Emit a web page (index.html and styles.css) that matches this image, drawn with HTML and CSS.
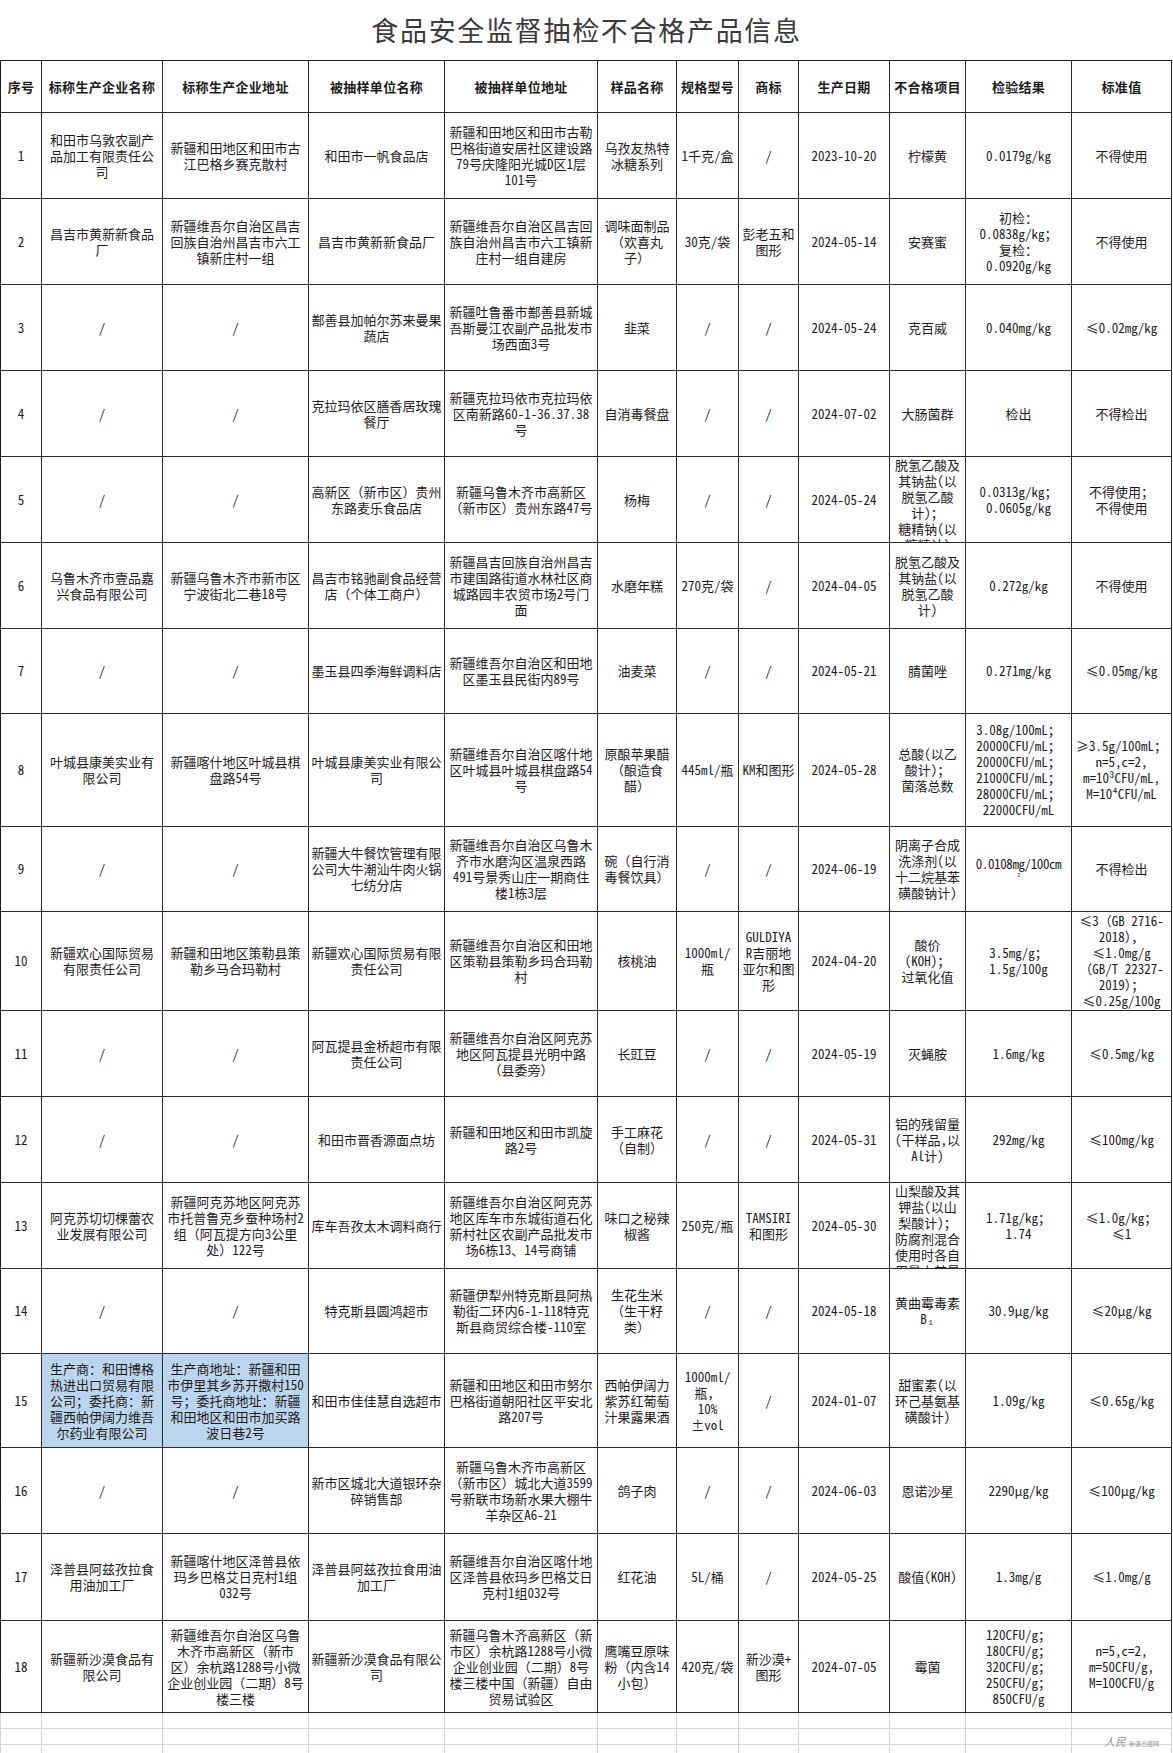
FILE: index.html
```html
<!DOCTYPE html>
<html lang="zh-CN">
<head>
<meta charset="utf-8">
<title>食品安全监督抽检不合格产品信息</title>
<link rel="stylesheet" href="styles.css">
</head>
<body>
<div class="page">
  <h1 class="title">食品安全监督抽检不合格产品信息</h1>
  <div class="sheet">
    <div class="row head">
      <div class="c">序号</div><div class="c">标称生产企业名称</div><div class="c">标称生产企业地址</div><div class="c">被抽样单位名称</div><div class="c">被抽样单位地址</div><div class="c">样品名称</div><div class="c">规格型号</div><div class="c">商标</div><div class="c">生产日期</div><div class="c">不合格项目</div><div class="c">检验结果</div><div class="c">标准值</div>
    </div>
    <div class="row">
      <div class="c">1</div><div class="c">和田市乌敦农副产<br>品加工有限责任公<br>司</div><div class="c">新疆和田地区和田市古<br>江巴格乡赛克散村</div><div class="c">和田市一帆食品店</div><div class="c">新疆和田地区和田市古勒<br>巴格街道安居社区建设路<br>79号庆隆阳光城D区1层<br>101号</div><div class="c">乌孜友热特<br>冰糖系列</div><div class="c">1千克/盒</div><div class="c">/</div><div class="c">2023-10-20</div><div class="c">柠檬黄</div><div class="c">0.0179g/kg</div><div class="c">不得使用</div>
    </div>
    <div class="row">
      <div class="c">2</div><div class="c">昌吉市黄新新食品<br>厂</div><div class="c">新疆维吾尔自治区昌吉<br>回族自治州昌吉市六工<br>镇新庄村一组</div><div class="c">昌吉市黄新新食品厂</div><div class="c">新疆维吾尔自治区昌吉回<br>族自治州昌吉市六工镇新<br>庄村一组自建房</div><div class="c">调味面制品<br>（欢喜丸<br>子）</div><div class="c">30克/袋</div><div class="c">彭老五和<br>图形</div><div class="c">2024-05-14</div><div class="c">安赛蜜</div><div class="c">初检：<br>0.0838g/kg；<br>复检：<br>0.0920g/kg</div><div class="c">不得使用</div>
    </div>
    <div class="row">
      <div class="c">3</div><div class="c">/</div><div class="c">/</div><div class="c">鄯善县加帕尔苏来曼果<br>蔬店</div><div class="c">新疆吐鲁番市鄯善县新城<br>吾斯曼江农副产品批发市<br>场西面3号</div><div class="c">韭菜</div><div class="c">/</div><div class="c">/</div><div class="c">2024-05-24</div><div class="c">克百威</div><div class="c">0.040mg/kg</div><div class="c">≤0.02mg/kg</div>
    </div>
    <div class="row">
      <div class="c">4</div><div class="c">/</div><div class="c">/</div><div class="c">克拉玛依区膳香居玫瑰<br>餐厅</div><div class="c">新疆克拉玛依市克拉玛依<br>区南新路60-1-36.37.38<br>号</div><div class="c">自消毒餐盘</div><div class="c">/</div><div class="c">/</div><div class="c">2024-07-02</div><div class="c">大肠菌群</div><div class="c">检出</div><div class="c">不得检出</div>
    </div>
    <div class="row">
      <div class="c">5</div><div class="c">/</div><div class="c">/</div><div class="c">高新区（新市区）贵州<br>东路麦乐食品店</div><div class="c">新疆乌鲁木齐市高新区<br>（新市区）贵州东路47号</div><div class="c">杨梅</div><div class="c">/</div><div class="c">/</div><div class="c">2024-05-24</div><div class="c">脱氢乙酸及<br>其钠盐(以<br>脱氢乙酸<br>计)；<br>糖精钠(以<br>糖精计)</div><div class="c">0.0313g/kg；<br>0.0605g/kg</div><div class="c">不得使用；<br>不得使用</div>
    </div>
    <div class="row">
      <div class="c">6</div><div class="c">乌鲁木齐市壹品嘉<br>兴食品有限公司</div><div class="c">新疆乌鲁木齐市新市区<br>宁波街北二巷18号</div><div class="c">昌吉市铭驰副食品经营<br>店（个体工商户）</div><div class="c">新疆昌吉回族自治州昌吉<br>市建国路街道水林社区商<br>城路园丰农贸市场2号门<br>面</div><div class="c">水磨年糕</div><div class="c">270克/袋</div><div class="c">/</div><div class="c">2024-04-05</div><div class="c">脱氢乙酸及<br>其钠盐(以<br>脱氢乙酸<br>计)</div><div class="c">0.272g/kg</div><div class="c">不得使用</div>
    </div>
    <div class="row">
      <div class="c">7</div><div class="c">/</div><div class="c">/</div><div class="c">墨玉县四季海鲜调料店</div><div class="c">新疆维吾尔自治区和田地<br>区墨玉县民街内89号</div><div class="c">油麦菜</div><div class="c">/</div><div class="c">/</div><div class="c">2024-05-21</div><div class="c">腈菌唑</div><div class="c">0.271mg/kg</div><div class="c">≤0.05mg/kg</div>
    </div>
    <div class="row">
      <div class="c">8</div><div class="c">叶城县康美实业有<br>限公司</div><div class="c">新疆喀什地区叶城县棋<br>盘路54号</div><div class="c">叶城县康美实业有限公<br>司</div><div class="c">新疆维吾尔自治区喀什地<br>区叶城县叶城县棋盘路54<br>号</div><div class="c">原酿苹果醋<br>（酿造食<br>醋）</div><div class="c">445ml/瓶</div><div class="c">KM和图形</div><div class="c">2024-05-28</div><div class="c">总酸(以乙<br>酸计)；<br>菌落总数</div><div class="c">3.08g/100mL；<br>20000CFU/mL；<br>20000CFU/mL；<br>21000CFU/mL；<br>28000CFU/mL；<br>22000CFU/mL</div><div class="c">≥3.5g/100mL；<br>n=5,c=2,<br>m=10³CFU/mL,<br>M=10⁴CFU/mL</div>
    </div>
    <div class="row">
      <div class="c">9</div><div class="c">/</div><div class="c">/</div><div class="c">新疆大牛餐饮管理有限<br>公司大牛潮汕牛肉火锅<br>七纺分店</div><div class="c">新疆维吾尔自治区乌鲁木<br>齐市水磨沟区温泉西路<br>491号景秀山庄一期商住<br>楼1栋3层</div><div class="c">碗（自行消<br>毒餐饮具）</div><div class="c">/</div><div class="c">/</div><div class="c">2024-06-19</div><div class="c">阴离子合成<br>洗涤剂(以<br>十二烷基苯<br>磺酸钠计)</div><div class="c tight">0.0108mg/100cm<br><span class="sup">²</span></div><div class="c">不得检出</div>
    </div>
    <div class="row">
      <div class="c">10</div><div class="c">新疆欢心国际贸易<br>有限责任公司</div><div class="c">新疆和田地区策勒县策<br>勒乡马合玛勒村</div><div class="c">新疆欢心国际贸易有限<br>责任公司</div><div class="c">新疆维吾尔自治区和田地<br>区策勒县策勒乡玛合玛勒<br>村</div><div class="c">核桃油</div><div class="c">1000ml/<br>瓶</div><div class="c">GULDIYA<br>R吉丽地<br>亚尔和图<br>形</div><div class="c">2024-04-20</div><div class="c">酸价<br>(KOH)；<br>过氧化值</div><div class="c">3.5mg/g；<br>1.5g/100g</div><div class="c">≤3（GB 2716-<br>2018），<br>≤1.0mg/g<br>（GB/T 22327-<br>2019）；<br>≤0.25g/100g</div>
    </div>
    <div class="row">
      <div class="c">11</div><div class="c">/</div><div class="c">/</div><div class="c">阿瓦提县金桥超市有限<br>责任公司</div><div class="c">新疆维吾尔自治区阿克苏<br>地区阿瓦提县光明中路<br>（县委旁）</div><div class="c">长豇豆</div><div class="c">/</div><div class="c">/</div><div class="c">2024-05-19</div><div class="c">灭蝇胺</div><div class="c">1.6mg/kg</div><div class="c">≤0.5mg/kg</div>
    </div>
    <div class="row">
      <div class="c">12</div><div class="c">/</div><div class="c">/</div><div class="c">和田市晋香源面点坊</div><div class="c">新疆和田地区和田市凯旋<br>路2号</div><div class="c">手工麻花<br>（自制）</div><div class="c">/</div><div class="c">/</div><div class="c">2024-05-31</div><div class="c">铝的残留量<br>(干样品,以<br>Al计)</div><div class="c">292mg/kg</div><div class="c">≤100mg/kg</div>
    </div>
    <div class="row">
      <div class="c">13</div><div class="c">阿克苏切切棵蕾农<br>业发展有限公司</div><div class="c">新疆阿克苏地区阿克苏<br>市托普鲁克乡蚕种场村2<br>组（阿瓦提方向3公里<br>处）122号</div><div class="c">库车吾孜太木调料商行</div><div class="c">新疆维吾尔自治区阿克苏<br>地区库车市东城街道石化<br>新村社区农副产品批发市<br>场6栋13、14号商铺</div><div class="c">味口之秘辣<br>椒酱</div><div class="c">250克/瓶</div><div class="c">TAMSIRI<br>和图形</div><div class="c">2024-05-30</div><div class="c">山梨酸及其<br>钾盐(以山<br>梨酸计)；<br>防腐剂混合<br>使用时各自<br>用量占其最<br>大使用量</div><div class="c">1.71g/kg；<br>1.74</div><div class="c">≤1.0g/kg；<br>≤1</div>
    </div>
    <div class="row">
      <div class="c">14</div><div class="c">/</div><div class="c">/</div><div class="c">特克斯县圆鸿超市</div><div class="c">新疆伊犁州特克斯县阿热<br>勒街二环内6-1-118特克<br>斯县商贸综合楼-110室</div><div class="c">生花生米<br>（生干籽<br>类）</div><div class="c">/</div><div class="c">/</div><div class="c">2024-05-18</div><div class="c">黄曲霉毒素<br>B₁</div><div class="c">30.9μg/kg</div><div class="c">≤20μg/kg</div>
    </div>
    <div class="row">
      <div class="c">15</div><div class="c sel">生产商：和田博格<br>热进出口贸易有限<br>公司；委托商：新<br>疆西帕伊阔力维吾<br>尔药业有限公司</div><div class="c sel">生产商地址：新疆和田<br>市伊里其乡苏开撒村150<br>号；委托商地址：新疆<br>和田地区和田市加买路<br>波日巷2号</div><div class="c">和田市佳佳慧自选超市</div><div class="c">新疆和田地区和田市努尔<br>巴格街道朝阳社区平安北<br>路207号</div><div class="c">西帕伊阔力<br>紫苏红葡萄<br>汁果露果酒</div><div class="c">1000ml/<br>瓶，<br>10%<br>±vol</div><div class="c">/</div><div class="c">2024-01-07</div><div class="c">甜蜜素(以<br>环己基氨基<br>磺酸计)</div><div class="c">1.09g/kg</div><div class="c">≤0.65g/kg</div>
    </div>
    <div class="row">
      <div class="c">16</div><div class="c">/</div><div class="c">/</div><div class="c">新市区城北大道银环杂<br>碎销售部</div><div class="c">新疆乌鲁木齐市高新区<br>（新市区）城北大道3599<br>号新联市场新水果大棚牛<br>羊杂区A6-21</div><div class="c">鸽子肉</div><div class="c">/</div><div class="c">/</div><div class="c">2024-06-03</div><div class="c">恩诺沙星</div><div class="c">2290μg/kg</div><div class="c">≤100μg/kg</div>
    </div>
    <div class="row">
      <div class="c">17</div><div class="c">泽普县阿兹孜拉食<br>用油加工厂</div><div class="c">新疆喀什地区泽普县依<br>玛乡巴格艾日克村1组<br>032号</div><div class="c">泽普县阿兹孜拉食用油<br>加工厂</div><div class="c">新疆维吾尔自治区喀什地<br>区泽普县依玛乡巴格艾日<br>克村1组032号</div><div class="c">红花油</div><div class="c">5L/桶</div><div class="c">/</div><div class="c">2024-05-25</div><div class="c">酸值(KOH)</div><div class="c">1.3mg/g</div><div class="c">≤1.0mg/g</div>
    </div>
    <div class="row">
      <div class="c">18</div><div class="c">新疆新沙漠食品有<br>限公司</div><div class="c">新疆维吾尔自治区乌鲁<br>木齐市高新区（新市<br>区）余杭路1288号小微<br>企业创业园（二期）8号<br>楼三楼</div><div class="c">新疆新沙漠食品有限公<br>司</div><div class="c">新疆乌鲁木齐高新区（新<br>市区）余杭路1288号小微<br>企业创业园（二期）8号<br>楼三楼中国（新疆）自由<br>贸易试验区</div><div class="c">鹰嘴豆原味<br>粉（内含14<br>小包）</div><div class="c">420克/袋</div><div class="c">新沙漠+<br>图形</div><div class="c">2024-07-05</div><div class="c">霉菌</div><div class="c">120CFU/g；<br>180CFU/g；<br>320CFU/g；<br>250CFU/g；<br>850CFU/g</div><div class="c">n=5,c=2,<br>m=50CFU/g,<br>M=100CFU/g</div>
    </div>
  </div>
  <div class="blank">
    <div class="brow"><i></i><i></i><i></i><i></i><i></i><i></i><i></i><i></i><i></i><i></i><i></i><i></i></div>
    <div class="brow"><i></i><i></i><i></i><i></i><i></i><i></i><i></i><i></i><i></i><i></i><i></i><i></i></div>
    <div class="brow"><i></i><i></i><i></i><i></i><i></i><i></i><i></i><i></i><i></i><i></i><i></i><i></i></div>
  </div>
  <div class="mark"><span class="mark-a">人民</span><span class="mark-b">新疆日报网</span></div>
</div>
</body>
</html>
```
FILE: styles.css
```css
html, body {
  margin: 0;
  padding: 0;
  background: #ffffff;
}
.page {
  position: relative;
  width: 1173px;
  height: 1753px;
  overflow: hidden;
}
.title {
  margin: 0;
  height: 60px;
  line-height: 60px;
  text-align: center;
  font-family: "Noto Sans CJK SC", sans-serif;
  font-weight: 400;
  font-size: 27px;
  letter-spacing: 1.7px;
  color: #3a3a3a;
}
.sheet {
  display: grid;
  grid-template-columns: 41px 121px 146px 136px 153px 79px 62px 60px 91px 76px 106px 100px;
  grid-template-rows: 52px 86px 86px 86px 86px 86px 86px 85px 113px 85px 99px 86px 86px 86px 85px 94px 86px 87px 92px;
  width: 1171px;
  border-top: 1px solid #1e1e1e;
  border-left: 1px solid #1e1e1e;
  font-family: "Noto Sans Mono CJK SC", "Liberation Mono", "Noto Sans CJK SC", monospace;
  font-size: 13px;
  line-height: 16px;
  color: #1c1c1c;
}
.row {
  display: contents;
}
.c {
  display: flex;
  flex-direction: column;
  justify-content: safe center;
  align-items: center;
  text-align: center;
  white-space: nowrap;
  overflow: hidden;
  border-right: 1px solid #2a2a2a;
  border-bottom: 1px solid #2a2a2a;
  box-sizing: border-box;
}
.head .c {
  font-weight: 700;
  font-family: "Noto Sans CJK SC", sans-serif;
  font-size: 13px;
  letter-spacing: 0.3px;
}
.sel {
  background: #bcd5ee;
}
.tight {
  letter-spacing: -0.4px;
}
.sup {
  font-size: 8px;
  line-height: 10px;
}
.blank {
  width: 1172px;
}
.brow {
  display: grid;
  grid-template-columns: 41px 121px 146px 136px 153px 79px 62px 60px 91px 76px 106px 100px;
  height: 16px;
  border-left: 1px solid #d6d6d6;
}
.brow i {
  border-right: 1px solid #d6d6d6;
  border-bottom: 1px solid #d6d6d6;
}
.mark {
  position: absolute;
  right: 14px;
  bottom: 4px;
  display: flex;
  align-items: baseline;
  gap: 3px;
  font-family: "Noto Sans CJK SC", sans-serif;
  color: #9a9a9a;
}
.mark-a {
  font-size: 11px;
  font-style: italic;
}
.mark-b {
  font-size: 6px;
}
```
